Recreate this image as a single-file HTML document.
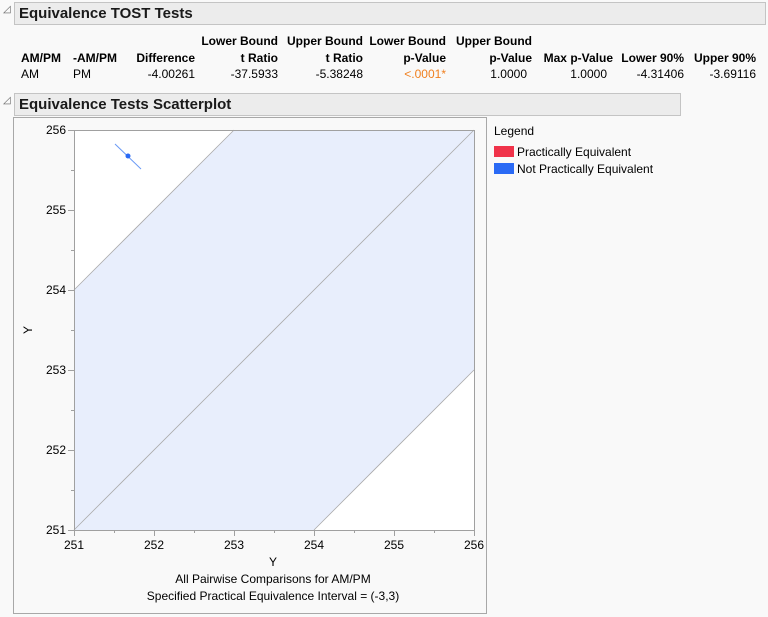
<!DOCTYPE html>
<html><head><style>
body{margin:0;width:768px;height:617px;background:#f9f9f9;font-family:"Liberation Sans",sans-serif;font-size:12px;color:#000;position:relative;overflow:hidden}
.hdr{position:absolute;background:#ececec;border:1px solid #c4c4c4;font-weight:bold;font-size:15px;color:#1a1a1a;box-sizing:border-box;padding:2px 0 0 4px}
.tri{position:absolute;font-size:10px;color:#666}
.r span{position:absolute;white-space:nowrap}
</style></head><body>
<div class="tri" style="left:3px;top:4px">◿</div>
<div class="hdr" style="left:14px;top:2px;width:752px;height:23px">Equivalence TOST Tests</div>
<div class="r" style="position:absolute;top:34px;left:0;width:768px;font-weight:bold">
<span style="right:490px">Lower&nbsp;Bound</span>
<span style="right:405px">Upper&nbsp;Bound</span>
<span style="right:322px">Lower&nbsp;Bound</span>
<span style="right:236px">Upper&nbsp;Bound</span>
</div>
<div class="r" style="position:absolute;top:51px;left:0;width:768px;font-weight:bold">
<span style="left:21px">AM/PM</span>
<span style="left:73px">-AM/PM</span>
<span style="right:573px">Difference</span>
<span style="right:490px">t&nbsp;Ratio</span>
<span style="right:405px">t&nbsp;Ratio</span>
<span style="right:322px">p-Value</span>
<span style="right:236px">p-Value</span>
<span style="right:155px">Max&nbsp;p-Value</span>
<span style="right:84px">Lower&nbsp;90%</span>
<span style="right:12px">Upper&nbsp;90%</span>
</div>
<div class="r" style="position:absolute;top:67px;left:0;width:768px">
<span style="left:21px">AM</span>
<span style="left:73px">PM</span>
<span style="right:573px">-4.00261</span>
<span style="right:490px">-37.5933</span>
<span style="right:405px">-5.38248</span>
<span style="right:322px;color:#f08020">&lt;.0001*</span>
<span style="right:241px">1.0000</span>
<span style="right:161px">1.0000</span>
<span style="right:84px">-4.31406</span>
<span style="right:12px">-3.69116</span>
</div>
<div class="tri" style="left:3px;top:95px">◿</div>
<div class="hdr" style="left:14px;top:93px;width:667px;height:23px">Equivalence Tests Scatterplot</div>
<div style="position:absolute;left:13px;top:117px;width:474px;height:497px;border:1px solid #a8a8a8;box-sizing:border-box"></div>
<svg style="position:absolute;left:0;top:0" width="768" height="617" font-family="Liberation Sans,sans-serif" font-size="12">
<rect x="74" y="130" width="400" height="400" fill="#fff"/>
<polygon points="74,530 74,290 234,130 474,130 474,370 314,530" fill="#e8eefc"/>
<line x1="74" y1="290" x2="234" y2="130" stroke="#aaa" stroke-width="0.8"/>
<line x1="74" y1="530" x2="474" y2="130" stroke="#aaa" stroke-width="0.8"/>
<line x1="314" y1="530" x2="474" y2="370" stroke="#aaa" stroke-width="0.8"/>
<rect x="74.5" y="130.5" width="400" height="400" fill="none" stroke="#a0a0a0"/>
<line x1="115" y1="144" x2="141" y2="169" stroke="#6a9af5" stroke-width="1"/>
<circle cx="128" cy="156" r="2.5" fill="#2a6af5"/>
<g stroke="#a0a0a0">
<line x1="68" y1="130.5" x2="74" y2="130.5"/><line x1="71" y1="170.5" x2="74" y2="170.5"/>
<line x1="68" y1="210.5" x2="74" y2="210.5"/><line x1="71" y1="250.5" x2="74" y2="250.5"/>
<line x1="68" y1="290.5" x2="74" y2="290.5"/><line x1="71" y1="330.5" x2="74" y2="330.5"/>
<line x1="68" y1="370.5" x2="74" y2="370.5"/><line x1="71" y1="410.5" x2="74" y2="410.5"/>
<line x1="68" y1="450.5" x2="74" y2="450.5"/><line x1="71" y1="490.5" x2="74" y2="490.5"/>
<line x1="68" y1="530.5" x2="74" y2="530.5"/>
<line x1="74.5" y1="530" x2="74.5" y2="536"/><line x1="114.5" y1="530" x2="114.5" y2="533"/>
<line x1="154.5" y1="530" x2="154.5" y2="536"/><line x1="194.5" y1="530" x2="194.5" y2="533"/>
<line x1="234.5" y1="530" x2="234.5" y2="536"/><line x1="274.5" y1="530" x2="274.5" y2="533"/>
<line x1="314.5" y1="530" x2="314.5" y2="536"/><line x1="354.5" y1="530" x2="354.5" y2="533"/>
<line x1="394.5" y1="530" x2="394.5" y2="536"/><line x1="434.5" y1="530" x2="434.5" y2="533"/>
<line x1="474.5" y1="530" x2="474.5" y2="536"/>
</g>
<g text-anchor="end">
<text x="66" y="134">256</text><text x="66" y="214">255</text><text x="66" y="294">254</text>
<text x="66" y="374">253</text><text x="66" y="454">252</text><text x="66" y="534">251</text>
</g>
<g text-anchor="middle">
<text x="74" y="549">251</text><text x="154" y="549">252</text><text x="234" y="549">253</text>
<text x="314" y="549">254</text><text x="394" y="549">255</text><text x="474" y="549">256</text>
<text x="273" y="566">Y</text>
<text x="273" y="583">All Pairwise Comparisons for AM/PM</text>
<text x="273" y="600">Specified Practical Equivalence Interval = (-3,3)</text>
</g>
<text x="32" y="330" text-anchor="middle" transform="rotate(-90 32 330)">Y</text>
<text x="494" y="135">Legend</text>
<rect x="494" y="146" width="20" height="11" fill="#f0334a"/>
<text x="517" y="156">Practically Equivalent</text>
<rect x="494" y="163" width="20" height="11" fill="#2a6af5"/>
<text x="517" y="173">Not Practically Equivalent</text>
</svg>
</body></html>
